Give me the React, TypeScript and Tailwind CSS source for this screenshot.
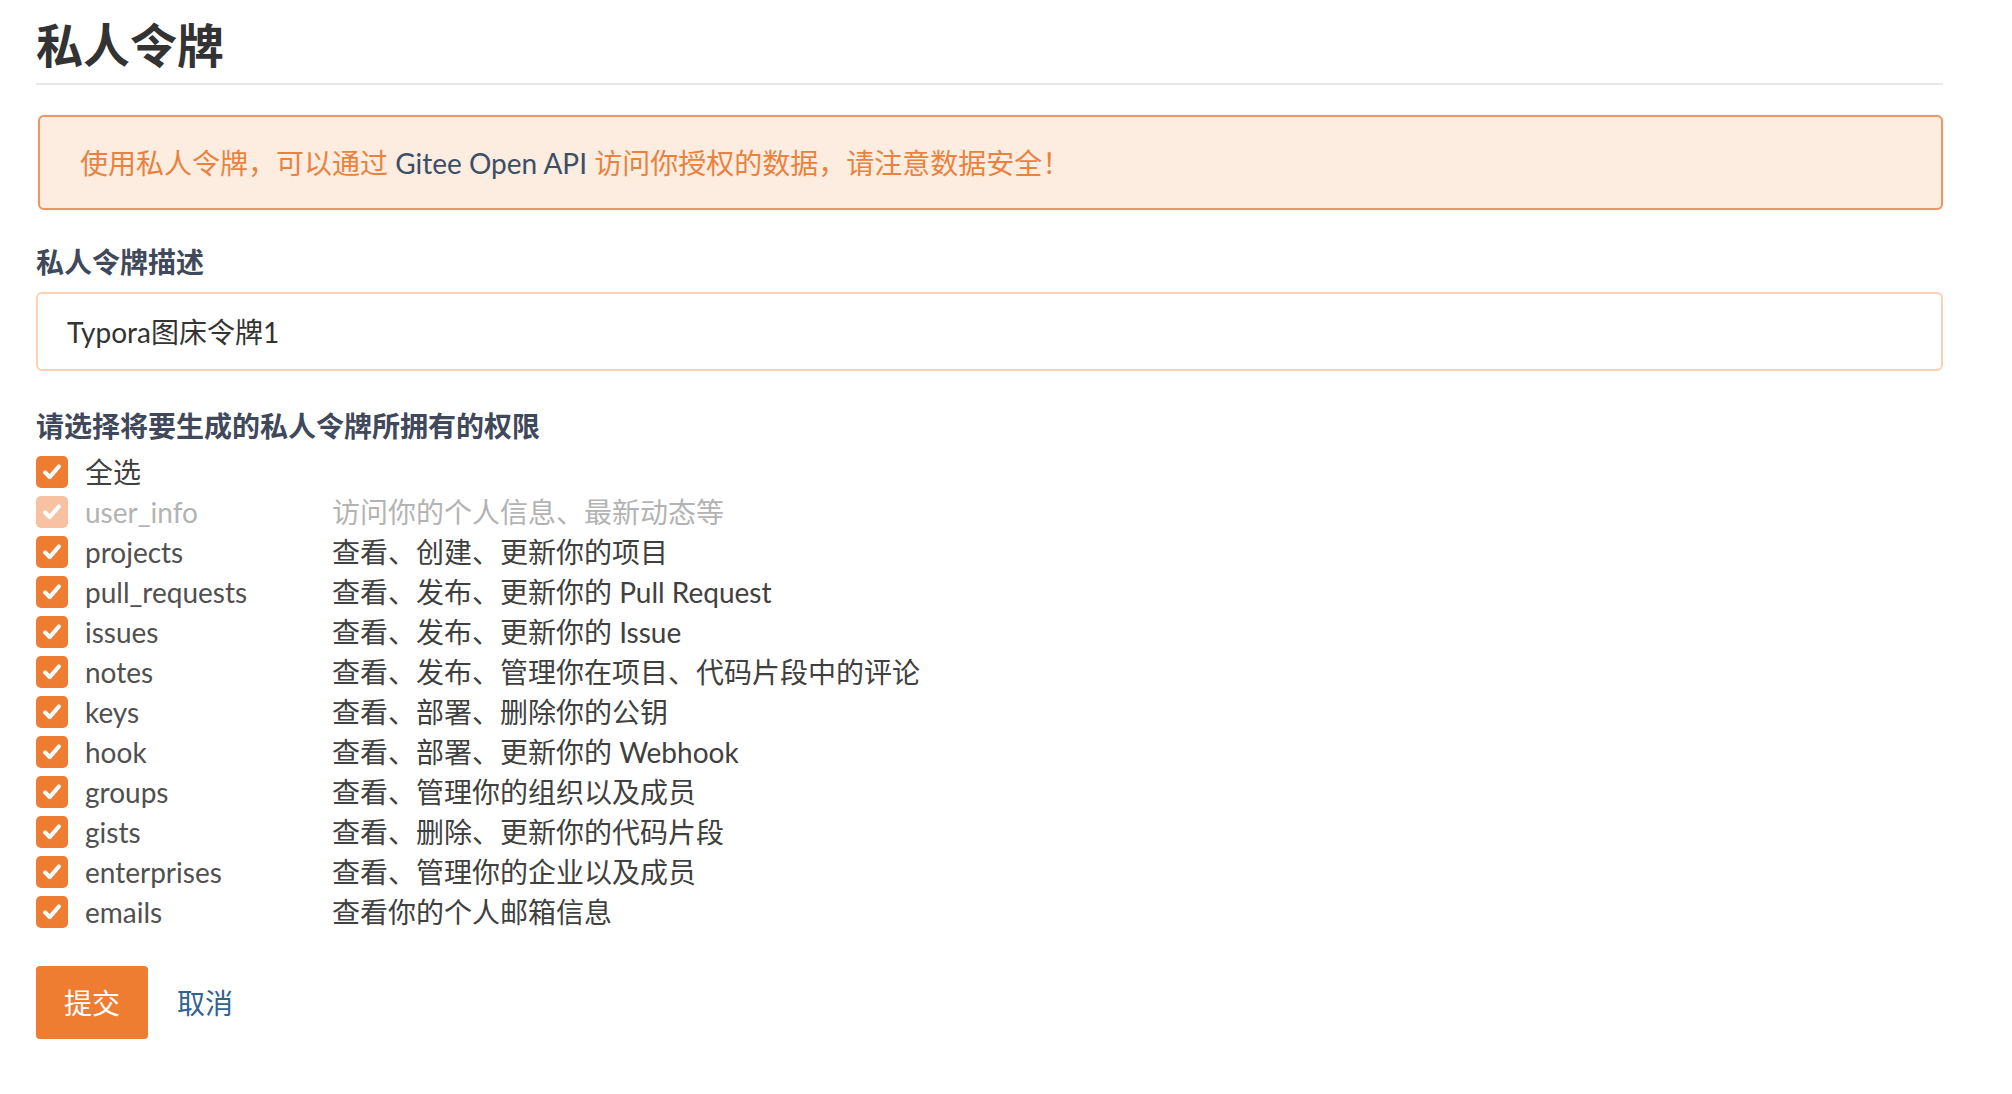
import React from "react";

interface Scope {
    name: string;
    desc: string;
    disabled?: boolean;
}

const scopes: Scope[] = [
    { name: "user_info", desc: "访问你的个人信息、最新动态等", disabled: true },
    { name: "projects", desc: "查看、创建、更新你的项目" },
    { name: "pull_requests", desc: "查看、发布、更新你的 Pull Request" },
    { name: "issues", desc: "查看、发布、更新你的 Issue" },
    { name: "notes", desc: "查看、发布、管理你在项目、代码片段中的评论" },
    { name: "keys", desc: "查看、部署、删除你的公钥" },
    { name: "hook", desc: "查看、部署、更新你的 Webhook" },
    { name: "groups", desc: "查看、管理你的组织以及成员" },
    { name: "gists", desc: "查看、删除、更新你的代码片段" },
    { name: "enterprises", desc: "查看、管理你的企业以及成员" },
    { name: "emails", desc: "查看你的个人邮箱信息" },
];

// Orange checked box
const CheckBox: React.FC<{ disabled?: boolean }> = ({ disabled }) => (
    <span
        className={
            disabled
                ? "w-[32px] h-[32px] rounded-[5px] bg-[#f7c1a2] flex items-center justify-center shrink-0"
                : "w-[32px] h-[32px] rounded-[5px] bg-[#ee7d32] flex items-center justify-center shrink-0"
        }
    >
        <svg width="22" height="22" viewBox="0 0 24 24" fill="none">
            <path
                d="M4.5 12.5l5 5L19.5 6"
                stroke="#ffffff"
                strokeWidth="4.5"
                strokeLinecap="round"
                strokeLinejoin="round"
            />
        </svg>
    </span>
);

export default function App() {
    return (
        <div className="min-h-[1094px] bg-white font-['Lato','Noto_Sans_CJK_SC',sans-serif]">
            <div className="pl-[36px] w-[1943px] pt-[18px]">
                {/* Title */}
                <h2 className="text-[47px] leading-[55px] font-bold text-[#333333] pb-[10px] border-b-2 border-[#e8e8e8]">
                    私人令牌
                </h2>

                {/* Alert */}
                <div className="mt-[30px] h-[95px] ml-[2px] flex items-center px-[40px] bg-[#fcede0] border-2 border-[#ea9763] rounded-[6px] shadow-[0_0_2px_rgba(0,0,0,0.15)]">
                    <p className="text-[28px] leading-[42px] text-[#e9823f]">
                        使用私人令牌，可以通过 <span className="text-[#3d4f66]">Gitee Open API</span> 访问你授权的数据，请注意数据安全！
                    </p>
                </div>

                {/* Description */}
                <label className="block mt-[31px] text-[28px] leading-[42px] font-bold text-[#40485b]">
                    私人令牌描述
                </label>
                <div className="mt-[9px] h-[79px] flex items-center pl-[29px] border-2 border-[#fbd0b3] rounded-[6px]">
                    <span className="text-[28px] text-[#333333]">Typora图床令牌1</span>
                </div>

                {/* Scopes */}
                <label className="block mt-[34px] text-[28px] leading-[42px] font-bold text-[#40485b]">
                    请选择将要生成的私人令牌所拥有的权限
                </label>
                <div className="mt-[5px] flex flex-col">
                    <div className="h-[40px] flex items-center">
                        <CheckBox />
                        <span className="ml-[17px] text-[28px] text-[#404040]">全选</span>
                    </div>
                    {scopes.map((s) => (
                        <div key={s.name} className="h-[40px] flex items-center">
                            <div className="w-[296px] flex items-center shrink-0">
                                <CheckBox disabled={s.disabled} />
                                <span
                                    className={
                                        s.disabled
                                            ? "ml-[17px] text-[28px] text-[#b3b3b3]"
                                            : "ml-[17px] text-[28px] text-[#505050]"
                                    }
                                >
                                    {s.name}
                                </span>
                            </div>
                            <span
                                className={
                                    s.disabled
                                        ? "text-[28px] text-[#b3b3b3]"
                                        : "text-[28px] text-[#404040]"
                                }
                            >
                                {s.desc}
                            </span>
                        </div>
                    ))}
                </div>

                {/* Actions */}
                <div className="mt-[34px] flex items-center">
                    <button
                        type="button"
                        className="w-[112px] h-[73px] rounded-[4px] bg-[#ee7d32] text-white text-[28px]"
                    >
                        提交
                    </button>
                    <a className="ml-[29px] text-[28px] text-[#2f6390] cursor-pointer">取消</a>
                </div>
            </div>
        </div>
    );
}
